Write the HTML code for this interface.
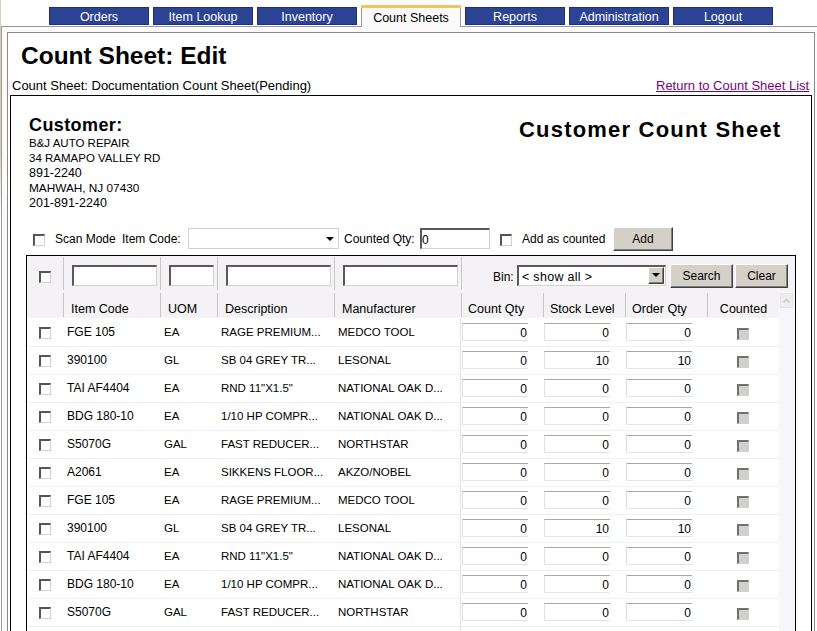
<!DOCTYPE html>
<html><head><meta charset="utf-8">
<style>
html,body{margin:0;padding:0;}
body{width:817px;height:631px;overflow:hidden;position:relative;background:#fff;font-family:"Liberation Sans",sans-serif;font-size:12px;color:#000;}
.a{position:absolute;}
.t{position:absolute;white-space:nowrap;line-height:15px;}
.tab{position:absolute;top:7px;width:100px;height:18px;box-sizing:border-box;border:1px solid #1f2f78;background:#2b4295;color:#fff;text-align:center;font-size:12.5px;line-height:18px;}
.tabact{position:absolute;top:5px;left:361px;width:98px;height:22px;background:#fafafa;border-left:1px solid #9a9a9a;border-right:1px solid #9a9a9a;text-align:center;font-size:12.5px;line-height:26px;}
.cb{position:absolute;width:9px;height:9px;border-top:2px solid #555;border-left:2px solid #555;border-right:1px solid #d4d0c8;border-bottom:1px solid #d4d0c8;background:#fff;box-sizing:content-box;}
.cbd{background:#d0d0d0;border-top:2px solid #707070;border-left:2px solid #707070;}
.inp{position:absolute;box-sizing:border-box;border-top:2px solid #5a5a5a;border-left:2px solid #5a5a5a;border-right:1px solid #d4d0c8;border-bottom:1px solid #d4d0c8;background:#fff;}
.btn{position:absolute;box-sizing:border-box;background:#d4d0c8;border-top:1px solid #fff;border-left:1px solid #fff;border-right:1px solid #404040;border-bottom:1px solid #404040;box-shadow:inset -1px -1px 0 #808080;text-align:center;}
.vs{position:absolute;width:1px;background:#c8c8c8;}
.hs{position:absolute;height:1px;background:#efefef;}
.qi{position:absolute;box-sizing:border-box;height:18px;width:66px;border-top:1px solid #a8a8a8;border-left:1px solid #e0e0e0;border-bottom:1px solid #e4e4e4;text-align:right;padding-right:1px;line-height:18px;}
</style></head><body>
<!-- window edges -->
<div class="a" style="left:0;top:0;width:1px;height:631px;background:linear-gradient(#d6cfb4 0px,#d6cfb4 150px,#fff 215px)"></div>
<div class="a" style="left:1px;top:26px;width:360px;height:1px;background:#9a9a9a"></div><div class="a" style="left:460px;top:26px;width:357px;height:1px;background:#9a9a9a"></div>
<div class="a" style="left:1px;top:26px;width:1px;height:605px;background:#9a9a9a"></div>
<div class="a" style="left:2px;top:27px;width:815px;height:604px;background:#fbf9fa"></div>
<div class="a" style="left:7px;top:32px;width:806px;height:600px;border:1px solid #8a8a8a;background:#fff"></div>

<!-- tabs -->
<div class="tab" style="left:49px">Orders</div>
<div class="tab" style="left:153px">Item Lookup</div>
<div class="tab" style="left:257px">Inventory</div>
<div class="tabact"><div class="a" style="left:-1px;top:0;width:100px;height:3px;background:#f0c55e"></div>Count Sheets</div>
<div class="tab" style="left:465px">Reports</div>
<div class="tab" style="left:569px">Administration</div>
<div class="tab" style="left:673px">Logout</div>

<!-- title -->
<div class="t" style="left:21px;top:42px;font-size:24.5px;font-weight:bold;line-height:28px">Count Sheet: Edit</div>
<div class="t" style="left:12px;top:78px;font-size:13px">Count Sheet: Documentation Count Sheet(Pending)</div>
<div class="t" style="left:656px;top:78px;font-size:13px;color:#800080;text-decoration:underline">Return to Count Sheet List</div>

<!-- main box -->
<div class="a" style="left:10px;top:95px;width:800px;height:540px;border:1px solid #000"></div>

<!-- customer -->
<div class="t" style="left:29px;top:115px;font-size:18px;font-weight:bold;line-height:20px;letter-spacing:0.4px">Customer:</div>
<div class="t" style="left:29px;top:136px;font-size:11.5px">B&amp;J AUTO REPAIR<br>34 RAMAPO VALLEY RD<br><span style="font-size:12.5px">891-2240</span><br><span style="font-size:11.8px">MAHWAH, NJ 07430</span><br><span style="font-size:12.5px">201-891-2240</span></div>
<div class="t" style="left:519px;top:118px;font-size:22px;font-weight:bold;letter-spacing:1.2px;line-height:24px">Customer Count Sheet</div>

<!-- scan line -->
<div class="cb" style="left:33px;top:234px"></div>
<div class="t" style="left:55px;top:232px">Scan Mode</div>
<div class="t" style="left:122px;top:232px">Item Code:</div>
<div class="a" style="left:188px;top:228px;width:151px;height:21px;box-sizing:border-box;border:1px solid #cfcfcf;background:#fff"></div>
<div class="a" style="left:326px;top:237px;width:0;height:0;border-left:4px solid transparent;border-right:4px solid transparent;border-top:4px solid #000"></div>
<div class="t" style="left:344px;top:232px">Counted Qty:</div>
<div class="inp" style="left:420px;top:228px;width:70px;height:21px;padding-left:0px;line-height:20px">0</div>
<div class="cb" style="left:500px;top:234px"></div>
<div class="t" style="left:522px;top:232px">Add as counted</div>
<div class="btn" style="left:613px;top:227px;width:60px;height:24px;line-height:22px">Add</div>

<div class="a" style="left:26px;top:255px;width:768px;height:400px;border:1px solid #000;background:#fff"></div>
<div class="a" style="left:27px;top:256px;width:768px;height:36px;background:#f4f2f4"></div>
<div class="a" style="left:27px;top:292px;width:752px;height:26px;background:#f4f2f4"></div>
<div class="a" style="left:779px;top:292px;width:16px;height:340px;background:#f6f5f9"></div>
<div class="a" style="left:780px;top:293px;width:13px;height:15px;box-sizing:border-box;border:1px solid #e6e4e4;background:#efeeee"></div>
<svg class="a" style="left:780px;top:293px" width="13" height="15"><path d="M3.5 9.5 L6.5 6.5 L9.5 9.5" fill="none" stroke="#c8c8c8" stroke-width="1.6"/></svg>
<div class="vs" style="left:63px;top:257px;height:33px"></div>
<div class="vs" style="left:160px;top:257px;height:33px"></div>
<div class="vs" style="left:217px;top:257px;height:33px"></div>
<div class="vs" style="left:334px;top:257px;height:33px"></div>
<div class="vs" style="left:461px;top:257px;height:33px"></div>
<div class="vs" style="left:63px;top:293px;height:24px"></div>
<div class="vs" style="left:160px;top:293px;height:24px"></div>
<div class="vs" style="left:217px;top:293px;height:24px"></div>
<div class="vs" style="left:334px;top:293px;height:24px"></div>
<div class="vs" style="left:461px;top:293px;height:24px"></div>
<div class="vs" style="left:543px;top:293px;height:24px"></div>
<div class="vs" style="left:625px;top:293px;height:24px"></div>
<div class="vs" style="left:707px;top:293px;height:24px"></div>
<div class="cb" style="left:39px;top:271px"></div>
<div class="inp" style="left:72px;top:265px;width:85px;height:21px"></div>
<div class="inp" style="left:169px;top:265px;width:45px;height:21px"></div>
<div class="inp" style="left:226px;top:265px;width:105px;height:21px"></div>
<div class="inp" style="left:343px;top:265px;width:115px;height:21px"></div>
<div class="t" style="left:493px;top:270px">Bin:</div>
<div class="inp" style="left:517px;top:265px;width:149px;height:21px"></div>
<div class="t" style="left:522px;top:270px;font-size:12.5px;letter-spacing:0.3px">&lt; show all &gt;</div>
<div class="btn" style="left:648px;top:267px;width:16px;height:17px"></div>
<div class="a" style="left:652px;top:273px;width:0;height:0;border-left:4px solid transparent;border-right:4px solid transparent;border-top:4px solid #000"></div>
<div class="btn" style="left:670px;top:264px;width:63px;height:24px;line-height:23px">Search</div>
<div class="btn" style="left:735px;top:264px;width:53px;height:24px;line-height:23px">Clear</div>
<div class="t" style="left:71px;top:302px;font-size:12.5px">Item Code</div>
<div class="t" style="left:168px;top:302px;font-size:12.5px">UOM</div>
<div class="t" style="left:225px;top:302px;font-size:12.5px">Description</div>
<div class="t" style="left:342px;top:302px;font-size:12.5px">Manufacturer</div>
<div class="t" style="left:468px;top:302px;font-size:12.5px">Count Qty</div>
<div class="t" style="left:550px;top:302px;font-size:12.5px">Stock Level</div>
<div class="t" style="left:632px;top:302px;font-size:12.5px">Order Qty</div>
<div class="t" style="left:708px;top:302px;width:71px;text-align:center;font-size:12.5px">Counted</div>
<div class="hs" style="left:27px;top:346px;width:752px"></div>
<div class="cb" style="left:39px;top:327px"></div>
<div class="t" style="left:67px;top:325px">FGE 105</div>
<div class="t" style="left:164px;top:325px;font-size:11.5px">EA</div>
<div class="t" style="left:221px;top:325px;font-size:11.5px">RAGE PREMIUM...</div>
<div class="t" style="left:338px;top:325px;font-size:11.5px">MEDCO TOOL</div>
<div class="qi" style="left:462px;top:323px">0</div>
<div class="qi" style="left:544px;top:323px">0</div>
<div class="qi" style="left:626px;top:323px">0</div>
<div class="cb cbd" style="left:737px;top:328px"></div>
<div class="hs" style="left:27px;top:374px;width:752px"></div>
<div class="cb" style="left:39px;top:355px"></div>
<div class="t" style="left:67px;top:353px">390100</div>
<div class="t" style="left:164px;top:353px;font-size:11.5px">GL</div>
<div class="t" style="left:221px;top:353px;font-size:11.5px">SB 04 GREY TR...</div>
<div class="t" style="left:338px;top:353px;font-size:11.5px">LESONAL</div>
<div class="qi" style="left:462px;top:351px">0</div>
<div class="qi" style="left:544px;top:351px">10</div>
<div class="qi" style="left:626px;top:351px">10</div>
<div class="cb cbd" style="left:737px;top:356px"></div>
<div class="hs" style="left:27px;top:402px;width:752px"></div>
<div class="cb" style="left:39px;top:383px"></div>
<div class="t" style="left:67px;top:381px">TAI AF4404</div>
<div class="t" style="left:164px;top:381px;font-size:11.5px">EA</div>
<div class="t" style="left:221px;top:381px;font-size:11.5px">RND 11&quot;X1.5&quot;</div>
<div class="t" style="left:338px;top:381px;font-size:11.5px">NATIONAL OAK D...</div>
<div class="qi" style="left:462px;top:379px">0</div>
<div class="qi" style="left:544px;top:379px">0</div>
<div class="qi" style="left:626px;top:379px">0</div>
<div class="cb cbd" style="left:737px;top:384px"></div>
<div class="hs" style="left:27px;top:430px;width:752px"></div>
<div class="cb" style="left:39px;top:411px"></div>
<div class="t" style="left:67px;top:409px">BDG 180-10</div>
<div class="t" style="left:164px;top:409px;font-size:11.5px">EA</div>
<div class="t" style="left:221px;top:409px;font-size:11.5px">1/10 HP COMPR...</div>
<div class="t" style="left:338px;top:409px;font-size:11.5px">NATIONAL OAK D...</div>
<div class="qi" style="left:462px;top:407px">0</div>
<div class="qi" style="left:544px;top:407px">0</div>
<div class="qi" style="left:626px;top:407px">0</div>
<div class="cb cbd" style="left:737px;top:412px"></div>
<div class="hs" style="left:27px;top:458px;width:752px"></div>
<div class="cb" style="left:39px;top:439px"></div>
<div class="t" style="left:67px;top:437px">S5070G</div>
<div class="t" style="left:164px;top:437px;font-size:11.5px">GAL</div>
<div class="t" style="left:221px;top:437px;font-size:11.5px">FAST REDUCER...</div>
<div class="t" style="left:338px;top:437px;font-size:11.5px">NORTHSTAR</div>
<div class="qi" style="left:462px;top:435px">0</div>
<div class="qi" style="left:544px;top:435px">0</div>
<div class="qi" style="left:626px;top:435px">0</div>
<div class="cb cbd" style="left:737px;top:440px"></div>
<div class="hs" style="left:27px;top:486px;width:752px"></div>
<div class="cb" style="left:39px;top:467px"></div>
<div class="t" style="left:67px;top:465px">A2061</div>
<div class="t" style="left:164px;top:465px;font-size:11.5px">EA</div>
<div class="t" style="left:221px;top:465px;font-size:11.5px">SIKKENS FLOOR...</div>
<div class="t" style="left:338px;top:465px;font-size:11.5px">AKZO/NOBEL</div>
<div class="qi" style="left:462px;top:463px">0</div>
<div class="qi" style="left:544px;top:463px">0</div>
<div class="qi" style="left:626px;top:463px">0</div>
<div class="cb cbd" style="left:737px;top:468px"></div>
<div class="hs" style="left:27px;top:514px;width:752px"></div>
<div class="cb" style="left:39px;top:495px"></div>
<div class="t" style="left:67px;top:493px">FGE 105</div>
<div class="t" style="left:164px;top:493px;font-size:11.5px">EA</div>
<div class="t" style="left:221px;top:493px;font-size:11.5px">RAGE PREMIUM...</div>
<div class="t" style="left:338px;top:493px;font-size:11.5px">MEDCO TOOL</div>
<div class="qi" style="left:462px;top:491px">0</div>
<div class="qi" style="left:544px;top:491px">0</div>
<div class="qi" style="left:626px;top:491px">0</div>
<div class="cb cbd" style="left:737px;top:496px"></div>
<div class="hs" style="left:27px;top:542px;width:752px"></div>
<div class="cb" style="left:39px;top:523px"></div>
<div class="t" style="left:67px;top:521px">390100</div>
<div class="t" style="left:164px;top:521px;font-size:11.5px">GL</div>
<div class="t" style="left:221px;top:521px;font-size:11.5px">SB 04 GREY TR...</div>
<div class="t" style="left:338px;top:521px;font-size:11.5px">LESONAL</div>
<div class="qi" style="left:462px;top:519px">0</div>
<div class="qi" style="left:544px;top:519px">10</div>
<div class="qi" style="left:626px;top:519px">10</div>
<div class="cb cbd" style="left:737px;top:524px"></div>
<div class="hs" style="left:27px;top:570px;width:752px"></div>
<div class="cb" style="left:39px;top:551px"></div>
<div class="t" style="left:67px;top:549px">TAI AF4404</div>
<div class="t" style="left:164px;top:549px;font-size:11.5px">EA</div>
<div class="t" style="left:221px;top:549px;font-size:11.5px">RND 11&quot;X1.5&quot;</div>
<div class="t" style="left:338px;top:549px;font-size:11.5px">NATIONAL OAK D...</div>
<div class="qi" style="left:462px;top:547px">0</div>
<div class="qi" style="left:544px;top:547px">0</div>
<div class="qi" style="left:626px;top:547px">0</div>
<div class="cb cbd" style="left:737px;top:552px"></div>
<div class="hs" style="left:27px;top:598px;width:752px"></div>
<div class="cb" style="left:39px;top:579px"></div>
<div class="t" style="left:67px;top:577px">BDG 180-10</div>
<div class="t" style="left:164px;top:577px;font-size:11.5px">EA</div>
<div class="t" style="left:221px;top:577px;font-size:11.5px">1/10 HP COMPR...</div>
<div class="t" style="left:338px;top:577px;font-size:11.5px">NATIONAL OAK D...</div>
<div class="qi" style="left:462px;top:575px">0</div>
<div class="qi" style="left:544px;top:575px">0</div>
<div class="qi" style="left:626px;top:575px">0</div>
<div class="cb cbd" style="left:737px;top:580px"></div>
<div class="hs" style="left:27px;top:626px;width:752px"></div>
<div class="cb" style="left:39px;top:607px"></div>
<div class="t" style="left:67px;top:605px">S5070G</div>
<div class="t" style="left:164px;top:605px;font-size:11.5px">GAL</div>
<div class="t" style="left:221px;top:605px;font-size:11.5px">FAST REDUCER...</div>
<div class="t" style="left:338px;top:605px;font-size:11.5px">NORTHSTAR</div>
<div class="qi" style="left:462px;top:603px">0</div>
<div class="qi" style="left:544px;top:603px">0</div>
<div class="qi" style="left:626px;top:603px">0</div>
<div class="cb cbd" style="left:737px;top:608px"></div>
<div class="hs" style="left:27px;top:654px;width:752px"></div>
<div class="cb" style="left:39px;top:635px"></div>
<div class="t" style="left:67px;top:633px">A2061</div>
<div class="t" style="left:164px;top:633px;font-size:11.5px">EA</div>
<div class="t" style="left:221px;top:633px;font-size:11.5px">SIKKENS FLOOR...</div>
<div class="t" style="left:338px;top:633px;font-size:11.5px">AKZO/NOBEL</div>
<div class="qi" style="left:462px;top:631px">0</div>
<div class="qi" style="left:544px;top:631px">0</div>
<div class="qi" style="left:626px;top:631px">0</div>
<div class="cb cbd" style="left:737px;top:636px"></div>
<div class="vs" style="left:460px;top:318px;height:320px;background:#e4e4e4"></div>
</body></html>
